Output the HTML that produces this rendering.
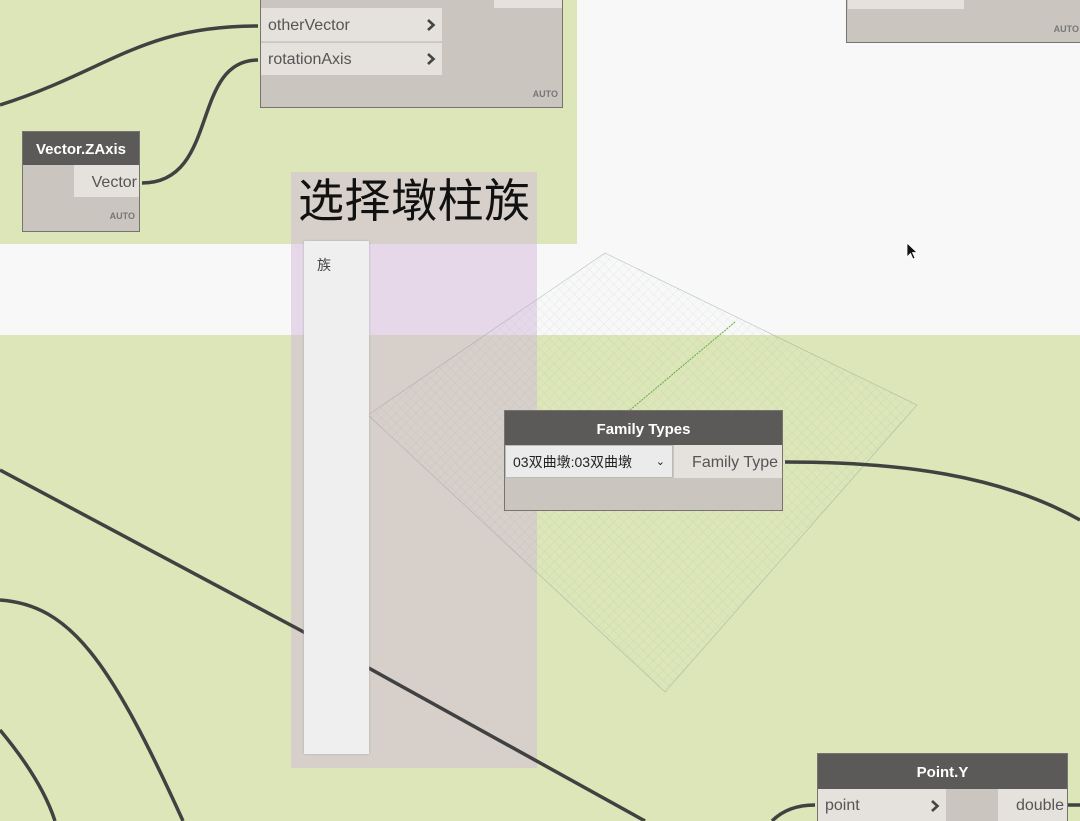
<!DOCTYPE html>
<html style="overflow:hidden;height:821px"><head><meta charset="utf-8"><style>
html,body{margin:0;padding:0}
body{width:1080px;height:821px;overflow:hidden;position:relative;background:#f8f8f8;font-family:"Liberation Sans","Noto Sans CJK SC",sans-serif}
.a{position:absolute}
.node{position:absolute;background:#cac5bf;border:1px solid #77736f;box-sizing:border-box;overflow:hidden}
.hdr{background:#5c5a58;color:#fff;font-weight:bold;font-size:15px;text-align:center}
.row{position:absolute;background:#e5e2dd;color:#555;font-size:16px;box-sizing:border-box;line-height:20px}
.chev{position:absolute;right:6px;top:7px}
.auto{position:absolute;font-size:9px;font-weight:bold;color:#777}
</style></head><body>
<div class="a" style="left:0;top:0;width:577px;height:244px;background:#dce6b8"></div>
<div class="a" style="left:0;top:335px;width:1080px;height:486px;background:#dce6b8"></div>
<div class="a" style="left:291px;top:172px;width:246px;height:596px;background:#d7cfc9"></div>
<div class="a" style="left:291px;top:244px;width:246px;height:91px;background:#e6d8e8"></div>
<div class="a" style="left:298px;top:170px;font-size:46px;color:#111;font-family:'Noto Sans CJK SC',sans-serif;line-height:56px;white-space:nowrap;letter-spacing:0.5px">选择墩柱族</div>
<svg class="a" style="left:0;top:0" width="1080" height="821">
<defs><pattern id="g" width="7" height="7" patternUnits="userSpaceOnUse"><path d="M0 0H7M0 0V7" stroke="#7a9a90" stroke-width="0.4" fill="none"/></pattern>
<clipPath id="c"><polygon points="605,253 917,405 665,692 368,415"/></clipPath></defs>
<g clip-path="url(#c)" opacity="0.35"><g transform="translate(640,470) rotate(45) translate(-640,-470)"><rect x="0" y="-200" width="1300" height="1300" fill="url(#g)"/></g></g>
<polygon points="605,253 917,405 665,692 368,415" fill="none" stroke="#8aa0a0" stroke-width="0.6" opacity="0.6"/>
<line x1="735" y1="322" x2="630" y2="410" stroke="#66aa44" stroke-width="1" stroke-dasharray="2 1"/>
<g fill="none" stroke="#414141" stroke-width="3.5">
<path d="M0 105 C110 70 140 26 258 26"/>
<path d="M142 183 C220 183 190 60 258 60"/>
<path d="M0 470 L300 630 L645 821"/>
<path d="M0 600 C70 605 110 660 183 821"/>
<path d="M0 730 C25 760 45 790 55 821"/>
<path d="M785 462 C900 462 1000 475 1080 520"/>
<path d="M815 805 C790 805 778 815 772 821"/>
<path d="M1068 805 L1080 805"/>
</g>
</svg>
<div class="a" style="left:304px;top:241px;width:65px;height:513px;background:#efefef;box-shadow:0 0 2px #aaa"></div>
<div class="a" style="left:317px;top:255px;font-size:14px;color:#444">族</div>
<svg width="0" height="0" style="position:absolute"><defs><symbol id="ch" viewBox="0 0 10 14"><path d="M2 2 L7.5 7 L2 12" fill="none" stroke="#444" stroke-width="2.6"/></symbol></defs></svg>
<div class="node" style="left:260px;top:-5px;width:303px;height:113px">
<div class="row" style="left:0;top:12px;width:181px;height:34px;border-bottom:1px solid #d0ccc6;padding:8px 7px">otherVector<svg class="chev" width="10" height="14" style="top:10px"><use href="#ch"/></svg></div>
<div class="row" style="left:0;top:47px;width:181px;height:32px;padding:7px 7px">rotationAxis<svg class="chev" width="10" height="14" style="top:9px"><use href="#ch"/></svg></div>
<div class="row" style="left:233px;top:0;width:68px;height:12px"></div>
<div class="auto" style="right:4px;top:93px">AUTO</div>
</div>
<div class="node" style="left:22px;top:131px;width:118px;height:101px">
<div class="hdr" style="height:33px;line-height:36px">Vector.ZAxis</div>
<div class="row" style="left:51px;top:33px;width:65px;height:32px;padding:8px 2px;text-align:right">Vector</div>
<div class="auto" style="right:4px;top:79px">AUTO</div>
</div>
<div class="node" style="left:846px;top:-5px;width:240px;height:48px">
<div class="row" style="left:1px;top:0;width:116px;height:13px"></div>
<div class="auto" style="right:6px;top:28px">AUTO</div>
</div>
<div class="node" style="left:504px;top:410px;width:279px;height:101px">
<div class="hdr" style="height:34px;line-height:37px">Family Types</div>
<div class="row" style="left:0;top:34px;width:168px;height:33px;background:#ebebeb;border:1px solid #bbb;padding:6px 7px;font-size:14px;color:#222">03双曲墩:03双曲墩<span class="a" style="right:7px;top:6px;font-size:11px">⌄</span></div>
<div class="row" style="left:169px;top:34px;width:108px;height:33px;padding:8px 4px;text-align:right">Family Type</div>
</div>
<div class="node" style="left:817px;top:753px;width:251px;height:68px;border-bottom:none">
<div class="hdr" style="height:35px;line-height:38px">Point.Y</div>
<div class="row" style="left:0;top:35px;width:128px;height:32px;padding:7px 7px">point<svg class="chev" width="10" height="14" style="top:10px"><use href="#ch"/></svg></div>
<div class="row" style="left:180px;top:35px;width:69px;height:32px;padding:7px 3px;text-align:right">double</div>
</div>
<svg class="a" style="left:906px;top:242px" width="14" height="20"><path d="M1 1 L1 15 L4.5 11.5 L7 17 L9 16 L6.5 10.5 L11 10.5 Z" fill="#111" stroke="#fff" stroke-width="0.8"/></svg>
</body></html>
